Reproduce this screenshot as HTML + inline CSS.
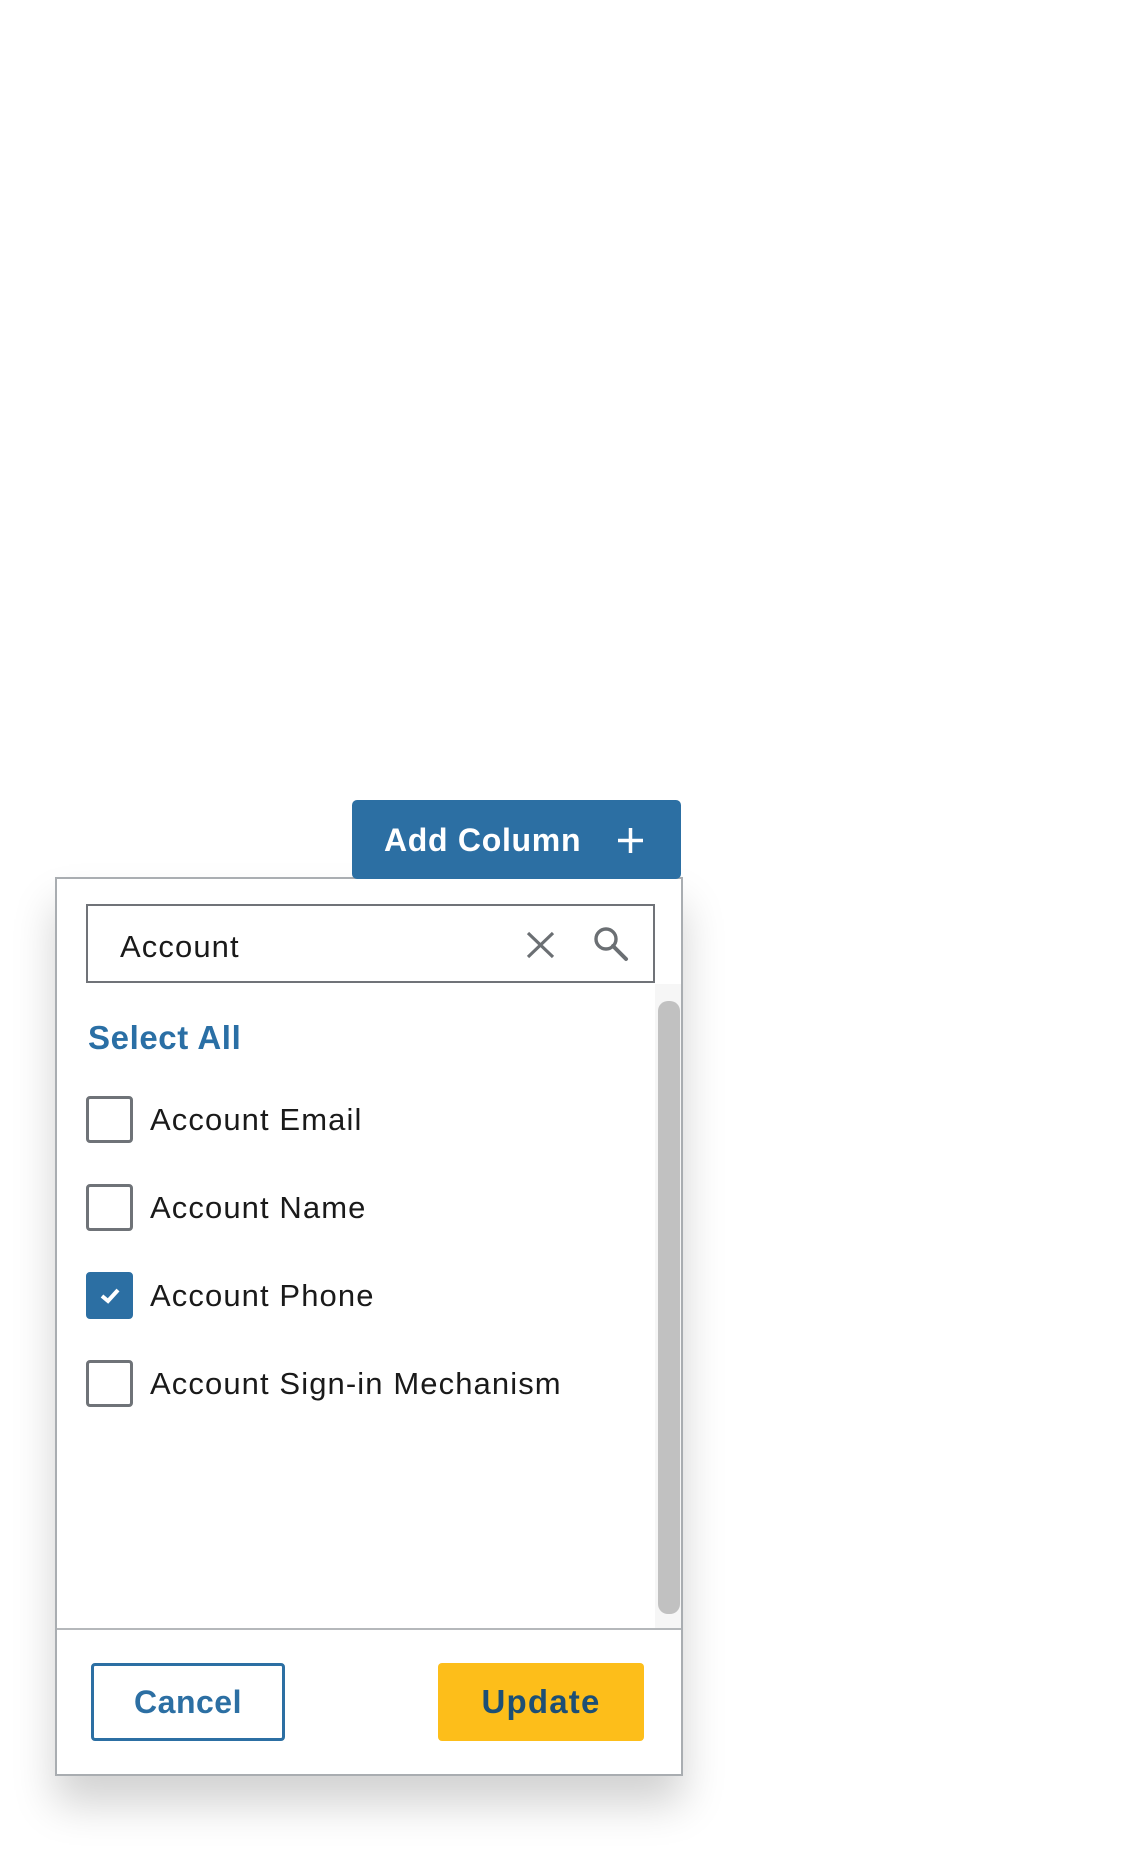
<!DOCTYPE html>
<html><head><meta charset="utf-8"><style>
html,body{margin:0;padding:0;background:#fff;width:1140px;height:1850px;overflow:hidden;font-family:"Liberation Sans",sans-serif;}
.abs{position:absolute;}
.panel{left:55px;top:877px;width:624px;height:895px;border:2px solid #a9adb1;background:#fff;box-shadow:0 28px 40px rgba(0,0,0,0.18);}
.btn{left:352px;top:800px;width:329px;height:79px;background:#2c6fa3;border-radius:5px;color:#fff;font-weight:bold;font-size:32px;letter-spacing:0.7px;}
.search{left:86px;top:904px;width:565px;height:75px;border:2px solid #707378;background:#fff;}
.row{left:86px;display:flex;align-items:center;height:47px;font-size:31px;color:#1a1a1a;letter-spacing:1.1px;}
.cb{width:41px;height:41px;border:3px solid #6f7378;border-radius:4px;margin-right:17px;box-sizing:content-box;flex:none;}
.cb.on{background:#2c6fa3;border-color:#2c6fa3;position:relative;}
</style></head><body>
<div class="abs panel"></div>
<div class="abs" style="left:655px;top:984px;width:26px;height:645px;background:#f6f6f6;"></div>
<div class="abs" style="left:658px;top:1001px;width:22px;height:613px;background:#c1c1c1;border-radius:10px;"></div>
<div class="abs" style="left:57px;top:1628px;width:624px;height:2px;background:#b5b8bb;"></div>
<div class="abs btn"><span class="abs" style="left:32px;top:22px;">Add Column</span>
<svg class="abs" style="left:264px;top:27px" width="29" height="27" viewBox="0 0 29 27"><path d="M14.5 1V26M2 13.5H27" stroke="#fff" stroke-width="3.5"/></svg></div>
<div class="abs search"><span class="abs" style="left:32px;top:23px;font-size:31px;color:#1a1a1a;letter-spacing:1.1px;">Account</span>
<svg class="abs" style="left:438px;top:25px" width="29" height="28" viewBox="0 0 29 28"><path d="M2 2L27 26M27 2L2 26" stroke="#6b6f73" stroke-width="3.2"/></svg>
<svg class="abs" style="left:505px;top:20px" width="36" height="36" viewBox="0 0 36 36"><circle cx="13" cy="13" r="10" fill="none" stroke="#6b6f73" stroke-width="3.4"/><path d="M20 20L33 33" stroke="#6b6f73" stroke-width="4" stroke-linecap="round"/></svg></div>
<div class="abs" style="left:88px;top:1019px;font-size:33px;font-weight:bold;color:#2a6fa5;letter-spacing:0.6px;">Select All</div>
<div class="abs row" style="top:1096px;"><div class="cb"></div>Account Email</div>
<div class="abs row" style="top:1184px;"><div class="cb"></div>Account Name</div>
<div class="abs row" style="top:1272px;"><div class="cb on"><svg class="abs" style="left:10px;top:11px" width="22" height="19" viewBox="0 0 22 19"><path d="M3 10L9 15L19 4" fill="none" stroke="#fff" stroke-width="4"/></svg></div>Account Phone</div>
<div class="abs row" style="top:1360px;"><div class="cb"></div>Account Sign-in Mechanism</div>
<div class="abs" style="left:91px;top:1663px;width:188px;height:72px;border:3px solid #2c6fa3;border-radius:4px;color:#2c6fa3;font-weight:bold;font-size:32px;letter-spacing:0.5px;display:flex;align-items:center;justify-content:center;">Cancel</div>
<div class="abs" style="left:438px;top:1663px;width:206px;height:78px;background:#fdbe1a;border-radius:4px;color:#1d4f75;font-weight:bold;font-size:33px;letter-spacing:1.2px;display:flex;align-items:center;justify-content:center;">Update</div>
</body></html>
